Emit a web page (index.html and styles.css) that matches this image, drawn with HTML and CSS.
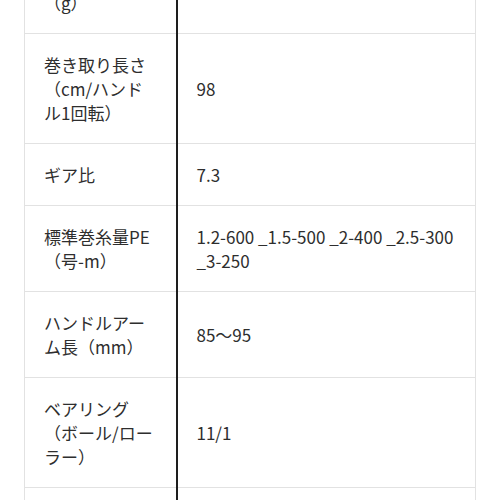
FILE: index.html
```html
<!DOCTYPE html>
<html lang="ja">
<head>
<meta charset="utf-8">
<link rel="stylesheet" href="styles.css">
</head>
<body>
<table class="spec">
<colgroup><col class="c1"><col class="c2"></colgroup>
<tbody>
<tr><td class="label">自重<br>（g）</td><td class="value"></td></tr>
<tr><td class="label">巻き取り長さ（cm/ハンドル1回転）</td><td class="value">98</td></tr>
<tr><td class="label">ギア比</td><td class="value">7.3</td></tr>
<tr><td class="label">標準巻糸量PE（号-m）</td><td class="value">1.2-600 _1.5-500 _2-400 _2.5-300 _3-250</td></tr>
<tr><td class="label">ハンドルアーム長（mm）</td><td class="value">85〜95</td></tr>
<tr><td class="label">ベアリング（ボール/ローラー）</td><td class="value">11/1</td></tr>
<tr><td class="label">&nbsp;</td><td class="value"></td></tr>
</tbody>
</table>
</body>
</html>
```
FILE: styles.css
```css
html, body {
  margin: 0;
  padding: 0;
  background: #ffffff;
  overflow: hidden;
}
.spec {
  margin-top: -53px;
  margin-left: 24px;
  width: 452px;
  border-collapse: collapse;
  table-layout: fixed;
  font-family: "Noto Sans CJK JP", "Noto Sans", sans-serif;
  font-size: 17px;
  line-height: 24px;
  color: #2e2e2e;
}
.c1 { width: 152px; }
.spec td {
  border: 1px solid #e2e2e2;
  padding: 18.5px 18px 18.5px 19px;
  vertical-align: middle;
  word-break: normal;
}
.spec td.label {
  border-right: 2px solid #1e1e1e;
}
```
